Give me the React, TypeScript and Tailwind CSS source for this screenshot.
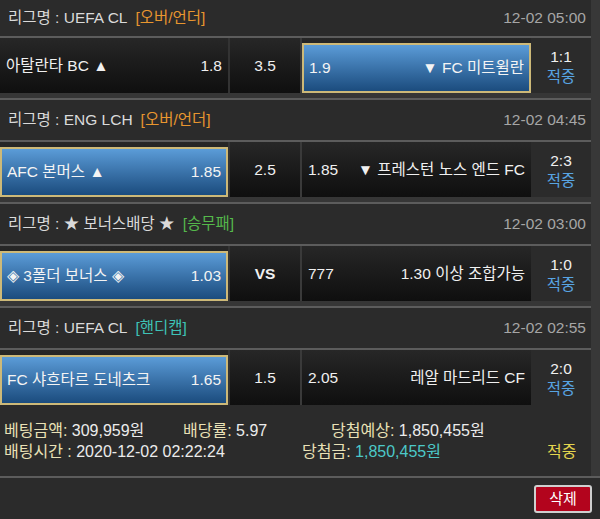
import React from "react";

interface Side {
  name: string;
  odds: string;
}

interface Match {
  league: string;
  tag: string;
  tagColor: string;
  time: string;
  home: Side;
  mid: string;
  away: Side;
  pick: "home" | "away";
  score: string;
  midBold?: boolean;
}

const matches: Match[] = [
  {
    league: "리그명 : UEFA CL",
    tag: "[오버/언더]",
    tagColor: "text-[#e8962f]",
    time: "12-02 05:00",
    home: { name: "아탈란타 BC ▲", odds: "1.8" },
    mid: "3.5",
    away: { name: "▼ FC 미트윌란", odds: "1.9" },
    pick: "away",
    score: "1:1",
  },
  {
    league: "리그명 : ENG LCH",
    tag: "[오버/언더]",
    tagColor: "text-[#e8962f]",
    time: "12-02 04:45",
    home: { name: "AFC 본머스 ▲", odds: "1.85" },
    mid: "2.5",
    away: { name: "▼ 프레스턴 노스 엔드 FC", odds: "1.85" },
    pick: "home",
    score: "2:3",
  },
  {
    league: "리그명 : ★ 보너스배당 ★",
    tag: "[승무패]",
    tagColor: "text-[#55b84b]",
    time: "12-02 03:00",
    home: { name: "◈ 3폴더 보너스 ◈", odds: "1.03" },
    mid: "VS",
    midBold: true,
    away: { name: "1.30 이상 조합가능", odds: "777" },
    pick: "home",
    score: "1:0",
  },
  {
    league: "리그명 : UEFA CL",
    tag: "[핸디캡]",
    tagColor: "text-[#3ec2b6]",
    time: "12-02 02:55",
    home: { name: "FC 샤흐타르 도네츠크", odds: "1.65" },
    mid: "1.5",
    away: { name: "레알 마드리드 CF", odds: "2.05" },
    pick: "home",
    score: "2:0",
  },
];

function TeamCell({ side, picked, reverse, width }: { side: Side; picked: boolean; reverse?: boolean; width: string }) {
  const content = reverse ? (
    <>
      <span>{side.odds}</span>
      <span>{side.name}</span>
    </>
  ) : (
    <>
      <span>{side.name}</span>
      <span>{side.odds}</span>
    </>
  );
  return (
    <div className={`${width} flex flex-col bg-linear-to-b from-[#272727] to-[#0f0f0f]`}>
      {picked ? (
        <div className="mt-auto h-[50px] flex items-center justify-between px-[5px] border-2 border-[#cdb978] bg-linear-to-b from-[#5b9cd8] to-[#1b4c7e] text-[#f4f4f4]">
          {content}
        </div>
      ) : (
        <div className="h-full flex items-center justify-between px-[6px] text-[#f0f0f0]">{content}</div>
      )}
    </div>
  );
}

function Block({ m, first, last }: { m: Match; first?: boolean; last?: boolean }) {
  return (
    <div>
      <div className={`${first ? "h-[36px]" : "h-[40px]"} flex items-center justify-between pl-2 pr-[5px]`}>
        <div className="text-[#dadada]">
          {m.league}
          <span className={`ml-2 ${m.tagColor}`}>{m.tag}</span>
        </div>
        <div className="text-[#a6a6a6]">{m.time}</div>
      </div>
      <div className="h-[2px] bg-[#5c5c5c]" />
      <div className="flex h-[55px]">
        <TeamCell side={m.home} picked={m.pick === "home"} width="w-[228px]" />
        <div className="w-[2px] bg-[#333333]" />
        <div
          className={`w-[70px] flex items-center justify-center bg-linear-to-b from-[#272727] to-[#0f0f0f] text-[#f0f0f0] ${
            m.midBold ? "font-bold" : ""
          }`}
        >
          {m.mid}
        </div>
        <div className="w-[2px] bg-[#3a3a3a]" />
        <TeamCell side={m.away} picked={m.pick === "away"} reverse width="w-[229px]" />
        <div className="flex-1 flex flex-col items-center justify-center pt-[3px] leading-[20px]">
          <span className="text-[#f0f0f0]">{m.score}</span>
          <span className="text-[#58a4e2]">적중</span>
        </div>
      </div>
      {!last && (
        <>
          <div className="h-[5px] bg-[#363636]" />
          <div className="h-[2px] bg-[#5c5c5c]" />
        </>
      )}
    </div>
  );
}

export default function App() {
  return (
    <div
      className="w-[600px] h-[519px] overflow-hidden bg-[#2b2b2b] text-[15.5px] leading-[20px]"
      style={{ fontFamily: '"Liberation Sans", Arial, "Noto Sans CJK KR", sans-serif' }}
    >
      <div className="flex">
        <div className="w-[591px]">
          {matches.map((m, i) => (
            <Block key={i} m={m} first={i === 0} last={i === matches.length - 1} />
          ))}

          {/* Bet summary */}
          <div className="pt-[15px] pb-[14px] pl-[4px] text-[16px] leading-[21px]">
            <div className="flex">
              <div className="w-[179px]">
                <span className="text-[#e9e1b6]">베팅금액: </span>
                <span className="text-[#ececec]">309,959원</span>
              </div>
              <div className="w-[148px]">
                <span className="text-[#e9e1b6]">배당률: </span>
                <span className="text-[#ececec]">5.97</span>
              </div>
              <div>
                <span className="text-[#e9e1b6]">당첨예상: </span>
                <span className="text-[#ececec]">1,850,455원</span>
              </div>
            </div>
            <div className="flex">
              <div className="w-[298px]">
                <span className="text-[#e9e1b6]">배팅시간 : </span>
                <span className="text-[#ececec]">2020-12-02 02:22:24</span>
              </div>
              <div className="w-[245px]">
                <span className="text-[#e9e1b6]">당첨금: </span>
                <span className="text-[#4cc8c8]">1,850,455원</span>
              </div>
              <div className="text-[#e4d54e]">적중</div>
            </div>
          </div>
        </div>
        <div className="flex-1 bg-[#383838]" />
      </div>
      <div className="h-[2px] bg-[#5c5c5c]" />
      <div className="flex justify-end pr-2 pt-[7px]">
        <button className="w-[58px] h-[28px] rounded-[3px] border-2 border-[#cfcfcf] bg-[#b3041d] text-white text-[15px]">
          삭제
        </button>
      </div>
    </div>
  );
}
